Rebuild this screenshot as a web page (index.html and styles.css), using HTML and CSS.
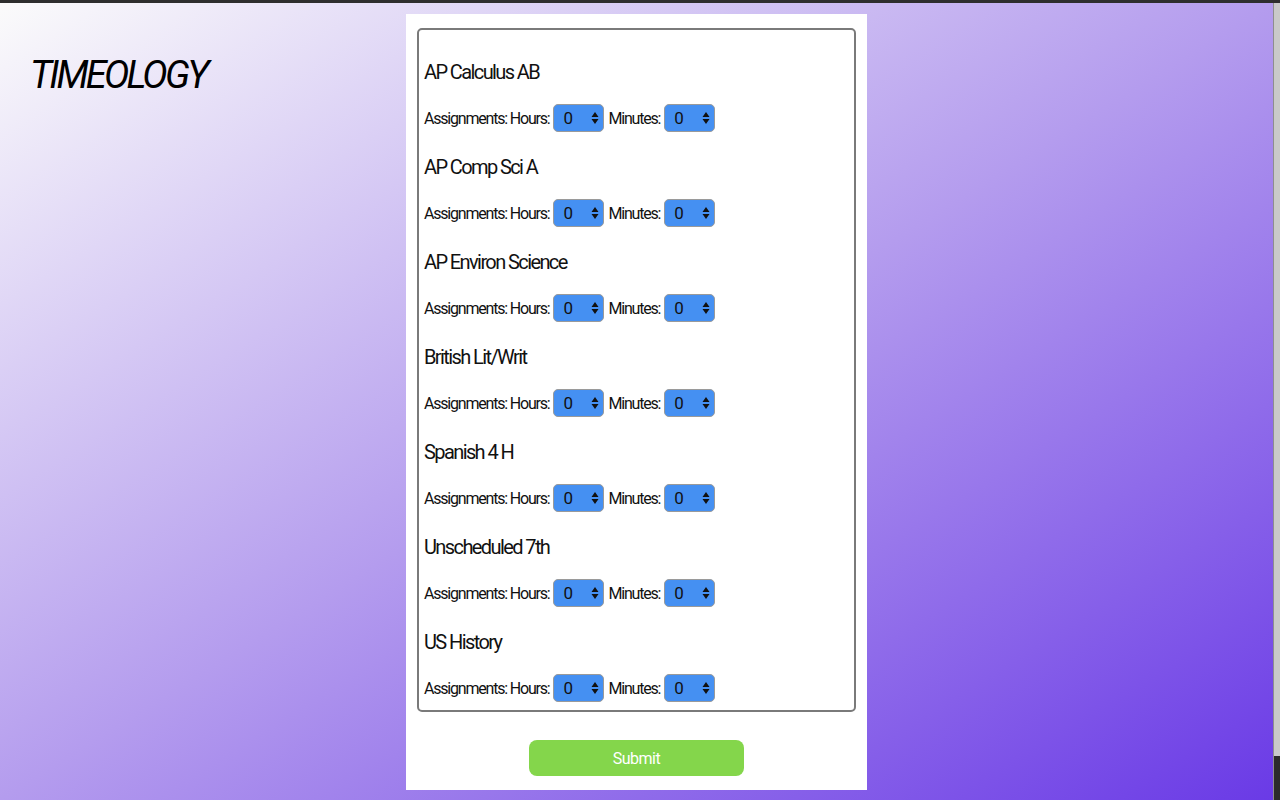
FILE: index.html
```html
<!DOCTYPE html>
<html>
<head>
<meta charset="utf-8">
<title>Timeology</title>
<link rel="stylesheet" href="styles.css">
</head>
<body>
<div class="topbar"></div>
<div class="window">
  <div class="page">
    <header class="brand"><h1>TIMEOLOGY</h1></header>
    <main class="panel">
      <form class="courses">
        <section class="course">
          <h2 class="course-title">AP Calculus AB</h2>
          <div class="row"><span>Assignments: Hours:</span><select class="sel"><option>0</option></select><span>Minutes:</span><select class="sel"><option>0</option></select></div>
        </section>
        <section class="course">
          <h2 class="course-title">AP Comp Sci A</h2>
          <div class="row"><span>Assignments: Hours:</span><select class="sel"><option>0</option></select><span>Minutes:</span><select class="sel"><option>0</option></select></div>
        </section>
        <section class="course">
          <h2 class="course-title">AP Environ Science</h2>
          <div class="row"><span>Assignments: Hours:</span><select class="sel"><option>0</option></select><span>Minutes:</span><select class="sel"><option>0</option></select></div>
        </section>
        <section class="course">
          <h2 class="course-title">British Lit/Writ</h2>
          <div class="row"><span>Assignments: Hours:</span><select class="sel"><option>0</option></select><span>Minutes:</span><select class="sel"><option>0</option></select></div>
        </section>
        <section class="course">
          <h2 class="course-title">Spanish 4 H</h2>
          <div class="row"><span>Assignments: Hours:</span><select class="sel"><option>0</option></select><span>Minutes:</span><select class="sel"><option>0</option></select></div>
        </section>
        <section class="course">
          <h2 class="course-title">Unscheduled 7th</h2>
          <div class="row"><span>Assignments: Hours:</span><select class="sel"><option>0</option></select><span>Minutes:</span><select class="sel"><option>0</option></select></div>
        </section>
        <section class="course">
          <h2 class="course-title">US History</h2>
          <div class="row"><span>Assignments: Hours:</span><select class="sel"><option>0</option></select><span>Minutes:</span><select class="sel"><option>0</option></select></div>
        </section>
      </form>
      <div class="actions"><button class="submit" type="button">Submit</button></div>
    </main>
  </div>
  <div class="scrollbar"><div class="corner"></div></div>
</div>
</body>
</html>
```

FILE: styles.css
```css
* { box-sizing: border-box; }
html, body { margin: 0; padding: 0; height: 100%; }
body {
  font-family: "Roboto", "Liberation Sans", sans-serif;
  color: #111;
  overflow: hidden;
  display: flex;
  flex-direction: column;
}
.topbar { height: 3px; background: #2e2e2e; flex: none; }
.window { flex: 1; display: flex; min-height: 0; }
.page {
  flex: 1;
  display: flex;
  background: linear-gradient(to bottom right, #fbfbfb 0%, #b49cee 50%, #6a3ae6 100%);
}
.brand { width: 406px; flex: none; padding: 46px 0 0 30px; }
.brand h1 {
  margin: 0;
  font-family: "Roboto", "Lato", sans-serif;
  font-style: italic;
  font-weight: 400;
  font-size: 38px;
  letter-spacing: -2.8px;
  line-height: 52px;
  color: #000;
}
.panel {
  width: 461px;
  margin-top: 11px;
  height: 776px;
  background: #fff;
  padding: 14px 11px 14px 11px;
  display: flex;
  flex-direction: column;
}
.courses {
  border: 2px solid #7a7a7a;
  border-radius: 5px;
  padding: 31px 5px 8px 5px;
  height: 684px;
}
.course { margin-bottom: 24px; }
.course:last-child { margin-bottom: 0; }
.course-title {
  margin: 0 0 20px 0;
  font-size: 20px;
  line-height: 23px;
  font-weight: normal;
  letter-spacing: -1.6px;
}
.row {
  display: flex;
  align-items: center;
  gap: 4px;
  height: 28px;
  font-size: 16px;
  letter-spacing: -1.2px;
}
.sel {
  -webkit-appearance: none;
  appearance: none;
  width: 51px;
  height: 28px;
  border: 1px solid #9a9a9a;
  border-radius: 5px;
  background-color: #4590f2;
  background-image: url("data:image/svg+xml;utf8,<svg xmlns='http://www.w3.org/2000/svg' width='8' height='14' viewBox='0 0 8 14'><path d='M4 1 L7.5 6 L0.5 6 Z M4 13 L7.5 8 L0.5 8 Z' fill='%23111'/></svg>");
  background-repeat: no-repeat;
  background-position: right 4px center;
  font-family: "Roboto", sans-serif;
  font-size: 17px;
  letter-spacing: 0;
  color: #111;
  padding: 0 0 0 9px;
  margin: 0;
}
.actions { flex: 1; display: flex; justify-content: center; align-items: flex-end; }
.submit {
  width: 215px;
  height: 36px;
  border: none;
  border-radius: 8px;
  background: #84d64b;
  color: #fff;
  font-family: "Roboto", sans-serif;
  font-size: 16px;
  letter-spacing: -0.5px;
  padding-top: 2px;
}
.scrollbar {
  width: 7px;
  flex: none;
  background: #c9c9c9;
  border-left: 1px solid #8e8e8e;
  display: flex;
  flex-direction: column;
  justify-content: flex-end;
}
.corner { height: 44px; background: #2b2b2b; }
```
